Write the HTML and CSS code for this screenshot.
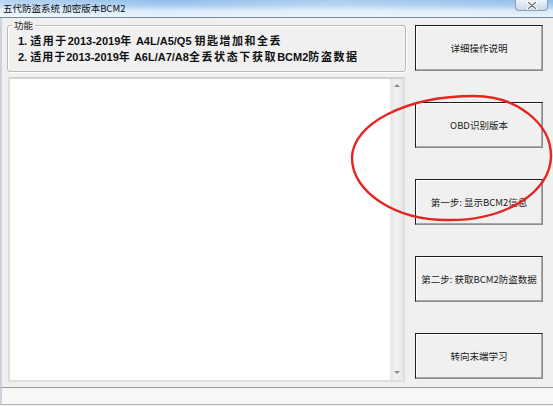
FILE: index.html
```html
<!DOCTYPE html>
<html lang="zh-CN">
<head>
<meta charset="utf-8">
<title>五代防盗系统 加密版本BCM2</title>
<link rel="stylesheet" href="styles.css">
</head>
<body>
<div class="window">
  <div class="titlebar">
    <span class="title">五代防盗系统 加密版本BCM2</span>
    <div class="close">
      <svg width="12" height="9" viewBox="0 0 12 9"><path d="M2.5 1.5 L9.5 7.5 M9.5 1.5 L2.5 7.5" stroke="#fff" stroke-width="3" stroke-linecap="round"/><path d="M2.5 1.5 L9.5 7.5 M9.5 1.5 L2.5 7.5" stroke="#6a6f78" stroke-width="1.2" stroke-linecap="round"/></svg>
    </div>
  </div>
  <div class="client">
    <div class="left">
      <div class="group">
        <span class="group-label">功能</span>
        <div class="line">1. <span class="cj mid">适用于</span>2013-2019<span class="cj mid">年</span> A4L/A5/Q5 <span class="cj mid">钥匙增加和全丢</span></div>
        <div class="line">2. <span class="cj">适用于</span>2013-2019<span class="cj">年</span> A6L/A7/A8<span class="cj wide">全丢状态下获取</span>BCM2<span class="cj wide">防盗数据</span></div>
      </div>
      <div class="memo">
        <div class="memo-text"></div>
        <div class="vscroll">
          <span class="arrow up"></span>
          <span class="arrow down"></span>
        </div>
      </div>
    </div>
    <div class="buttons">
      <button class="btn">详细操作说明</button>
      <button class="btn">OBD识别版本</button>
      <button class="btn">第一步: 显示BCM2信息</button>
      <button class="btn">第二步: 获取BCM2防盗数据</button>
      <button class="btn">转向末端学习</button>
    </div>
  </div>
  <div class="statusbar"></div>
  <svg class="annotation" width="553" height="406" viewBox="0 0 553 406">
    <path d="M352 158 C352 124 406 96 474 96 C516 96 551 123 551 156 C551 192 505 221 447 220 C395 220 352 192 352 158 Z" fill="none" stroke="#e3261f" stroke-width="2.4"/>
  </svg>
</div>
</body>
</html>
```
FILE: styles.css
```css
html, body {
  margin: 0;
  padding: 0;
  background: #f0f0f0;
}
.window {
  position: relative;
  width: 553px;
  height: 406px;
  overflow: hidden;
  background: #f0f0f0;
  font-family: "Liberation Sans", "Noto Sans CJK SC", sans-serif;
  color: #000;
}
.titlebar {
  position: relative;
  height: 17px;
  border-bottom: 1px solid #7b8898;
  background:
    linear-gradient(90deg, rgba(255,255,255,0.35) 0%, rgba(255,255,255,0) 30%, rgba(255,255,255,0.25) 60%, rgba(255,255,255,0) 100%),
    linear-gradient(180deg, #8fbbe8 0%, #a9cdf0 35%, #d6e9f8 60%, #e9f4fc 100%);
  display: flex;
  align-items: center;
}
.title {
  padding-left: 3px;
  font-family: "Noto Sans CJK SC", sans-serif;
  font-size: 9.5px;
  line-height: 12px;
  color: #111;
  margin-top: -2px;
}
.close {
  position: absolute;
  left: 515px;
  top: 0;
  width: 33px;
  height: 11px;
  box-sizing: border-box;
  border: 1px solid #8d9db3;
  border-top: none;
  border-radius: 0 0 4px 4px;
  background: linear-gradient(180deg, #eef4fa 0%, #d9e5f1 50%, #c9d9ea 100%);
  display: flex;
  align-items: center;
  justify-content: center;
}
.close svg { display: block; }
.client {
  height: 369px;
  display: flex;
  gap: 9px;
  padding: 7px 0 0 7px;
  box-sizing: border-box;
  border-left: 2px solid #c9d3dd;
}
.left {
  width: 399px;
  display: flex;
  flex-direction: column;
  margin-left: -2px;
}
.group {
  position: relative;
  height: 47px;
  box-sizing: border-box;
  padding: 6px 0 0 10px;
  border: 1px solid #b9b9b9;
  border-radius: 3px;
  box-shadow: inset 1px 1px 0 #fff, 1px 1px 0 #fff;
}
.group-label {
  position: absolute;
  left: 4px;
  top: -7px;
  padding: 0 2px;
  background: #f0f0f0;
  font-family: "Noto Sans CJK SC", sans-serif;
  font-size: 9.5px;
  line-height: 12px;
  color: #222;
}
.line {
  font-weight: bold;
  font-size: 11px;
  line-height: 16px;
  height: 16px;
  white-space: nowrap;
  color: #111;
}
.cj {
  font-family: "Noto Sans CJK SC", sans-serif;
  font-size: 11px;
  letter-spacing: 1px;
}
.cj.mid { letter-spacing: 1.5px; }
.cj.wide { letter-spacing: 1.6px; }
.memo {
  margin-top: 5px;
  margin-left: 1px;
  width: 397px;
  height: 305px;
  box-sizing: border-box;
  border: 2px solid #dedede;
  border-top-color: #d2d2d2;
  display: flex;
  background: #fff;
}
.memo-text {
  flex: 1;
  background: #fff;
}
.vscroll {
  width: 13px;
  background: linear-gradient(90deg, #e6e6e6 0%, #f2f2f2 50%, #e6e6e6 100%);
  display: flex;
  flex-direction: column;
  justify-content: space-between;
  align-items: center;
  padding: 5px 0 6px;
  box-sizing: border-box;
}
.arrow {
  width: 0;
  height: 0;
  border-left: 3px solid transparent;
  border-right: 3px solid transparent;
}
.arrow.up { border-bottom: 3px solid #8a8a8a; }
.arrow.down { border-top: 3px solid #8a8a8a; }
.buttons {
  width: 128px;
  display: flex;
  flex-direction: column;
  gap: 31px;
}
.btn {
  height: 46px;
  width: 128px;
  margin: 0;
  padding: 0;
  box-sizing: border-box;
  background: #f0f0f0;
  border: 1px solid #1e1e1e;
  border-right-color: #8c8c8c;
  border-bottom-color: #8c8c8c;
  box-shadow: inset -1px -1px 0 #a8a8a8, inset 1px 1px 0 #fff;
  font-family: "Noto Sans CJK SC", sans-serif;
  font-size: 9.5px;
  color: #1a1a1a;
  text-align: center;
  flex-shrink: 0;
}
.statusbar {
  height: 16px;
  border-top: 1px solid #9a9a9a;
  border-bottom: 1px solid #b5b5b5;
  border-left: 2px solid #c9d3dd;
  background: #f7f7f7;
}
.annotation {
  position: absolute;
  left: 0;
  top: 0;
  pointer-events: none;
}
```
